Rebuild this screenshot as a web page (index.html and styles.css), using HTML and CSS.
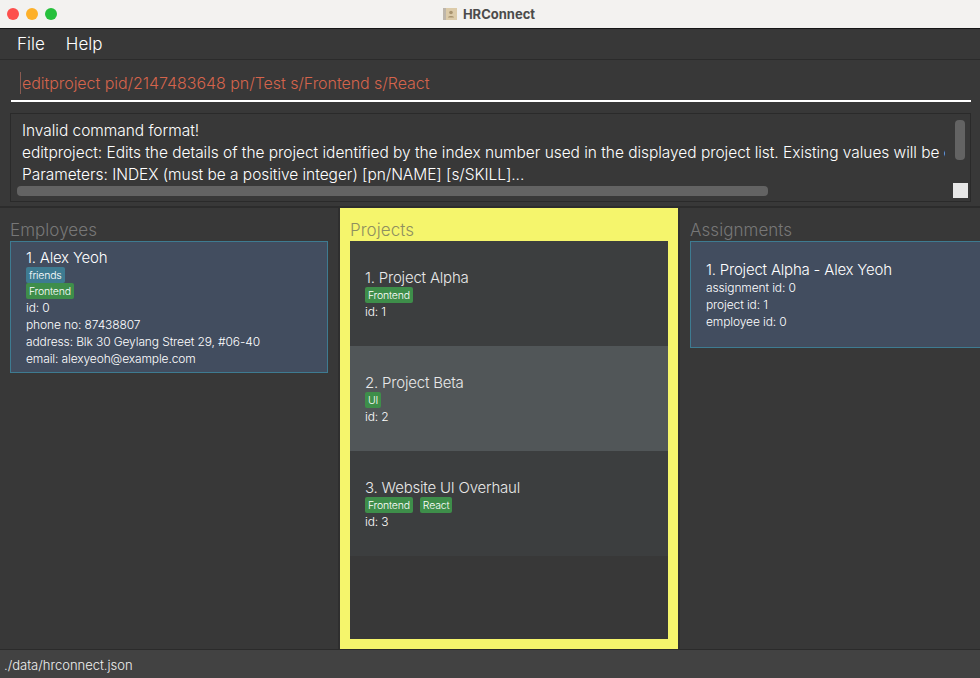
FILE: index.html
```html
<!DOCTYPE html>
<html lang="en">
<head>
<meta charset="utf-8">
<title>HRConnect</title>
<link rel="stylesheet" href="styles.css">
</head>
<body>
<div class="window">
  <header class="titlebar">
    <div class="lights"><span class="light red"></span><span class="light yellow"></span><span class="light green"></span></div>
    <div class="title">
      <svg class="appicon" width="14" height="14" viewBox="0 0 14 14"><rect x="0" y="1" width="14" height="12" fill="#dccba9"/><rect x="0" y="1" width="3" height="12" fill="#bdb6ab"/><circle cx="8" cy="5.5" r="1.8" fill="#a8946f"/><path d="M5 10.5c0-2 6-2 6 0z" fill="#a8946f"/></svg>
      <span>HRConnect</span>
    </div>
  </header>
  <nav class="menubar"><span>File</span><span>Help</span></nav>
  <section class="command">
    <div class="command-input"><span class="caret"></span>editproject pid/2147483648 pn/Test s/Frontend s/React</div>
  </section>
  <section class="result-wrap">
    <div class="result">
      <div class="result-text">
        <div>Invalid command format!</div>
        <div>editproject: Edits the details of the project identified by the index number used in the displayed project list. Existing values will be overwritten</div>
        <div>Parameters: INDEX (must be a positive integer) [pn/NAME] [s/SKILL]...</div>
      </div>
      <div class="vthumb"></div>
      <div class="hthumb"></div>
      <div class="corner"></div>
    </div>
  </section>
  <main class="panes">
    <section class="pane pane-employees">
      <h2 class="pane-title">Employees</h2>
      <div class="list">
        <article class="card selected employee">
          <div class="name">1. Alex Yeoh</div>
          <div class="tags"><span class="tag blue">friends</span></div>
          <div class="tags"><span class="tag">Frontend</span></div>
          <div class="line">id: 0</div>
          <div class="line">phone no: 87438807</div>
          <div class="line">address: Blk 30 Geylang Street 29, #06-40</div>
          <div class="line">email: alexyeoh@example.com</div>
        </article>
      </div>
    </section>
    <section class="pane pane-projects">
      <h2 class="pane-title">Projects</h2>
      <div class="list">
        <article class="row"><div class="name">1. Project Alpha</div><div class="tags"><span class="tag">Frontend</span></div><div class="line">id: 1</div></article>
        <article class="row even"><div class="name">2. Project Beta</div><div class="tags"><span class="tag">UI</span></div><div class="line">id: 2</div></article>
        <article class="row"><div class="name">3. Website UI Overhaul</div><div class="tags"><span class="tag">Frontend</span><span class="tag">React</span></div><div class="line">id: 3</div></article>
      </div>
    </section>
    <section class="pane pane-assignments">
      <h2 class="pane-title">Assignments</h2>
      <div class="list">
        <article class="card selected assignment">
          <div class="name">1. Project Alpha - Alex Yeoh</div>
          <div class="line">assignment id: 0</div>
          <div class="line">project id: 1</div>
          <div class="line">employee id: 0</div>
        </article>
      </div>
    </section>
  </main>
  <footer class="status">./data/hrconnect.json</footer>
</div>
</body>
</html>
```
FILE: styles.css
```css
* { box-sizing: border-box; margin: 0; padding: 0; }
html, body { width: 980px; height: 678px; overflow: hidden; }
body { font-family: Inter, "Liberation Sans", sans-serif; background: #383838; color: #fff; }
.window { width: 980px; height: 678px; display: flex; flex-direction: column; overflow: hidden; }

.titlebar { height: 29px; flex: none; background: #f3f2f0; border-bottom: 1px solid #161616; position: relative; display: flex; align-items: center; justify-content: center; }
.lights { position: absolute; left: 7px; top: 8px; display: flex; gap: 7px; }
.light { width: 12px; height: 12px; border-radius: 50%; }
.light.red { background: #fd4f4c; }
.light.yellow { background: #fdb029; }
.light.green { background: #26c03c; }
.title { display: flex; align-items: center; gap: 6px; font-size: 13px; font-weight: 700; color: #4b4b4b; margin-left: -2px; }

.menubar { height: 31px; flex: none; display: flex; gap: 21px; padding: 0 17px; align-items: center; font-size: 17px; font-weight: 300; color: #fff; border-bottom: 1px solid #2b2b2b; }

.command { height: 47px; flex: none; padding: 0 9px 0 11px; }
.command-input { height: 42px; border-bottom: 2px solid #fff; padding: 13px 0 0 11px; font-size: 16px; font-weight: 300; line-height: 20px; letter-spacing: -0.05px; color: #d4644c; position: relative; white-space: nowrap; }
.caret { position: absolute; left: 9px; top: 12px; width: 1px; height: 22px; background: #8a5a50; }

.result-wrap { height: 101px; flex: none; padding: 6px 9px 6px 10px; border-bottom: 2px solid #2c2c2c; }
.result { height: 89px; border: 1px solid #2a2a2a; position: relative; overflow: hidden; }
.result-text { padding: 6px 0 0 11px; font-size: 15.5px; font-weight: 300; line-height: 22px; letter-spacing: -0.04px; color: #fff; white-space: nowrap; width: 934px; overflow: hidden; }
.vthumb { position: absolute; left: 944px; top: 6px; width: 10px; height: 40px; border-radius: 4px; background: #636363; }
.hthumb { position: absolute; left: 6px; top: 72px; width: 751px; height: 10px; border-radius: 4px; background: #636363; }
.corner { position: absolute; left: 942px; top: 69px; width: 15px; height: 15px; background: #e8e8e8; }

.panes { flex: 1; min-height: 0; display: flex; }
.pane { flex: none; height: 100%; display: flex; flex-direction: column; padding: 10px; }
.pane-employees { width: 340px; border-right: 2px solid #2f2f2f; }
.pane-projects { width: 338px; background: #f5f56c; }
.pane-assignments { width: 340px; border-left: 2px solid #2f2f2f; margin-right: -38px; }
.pane-title { height: 23px; font-size: 17px; font-weight: 300; line-height: 23px; padding-top: 1px; color: #777; letter-spacing: 0.05px; }
.pane-projects .pane-title { color: #8f8f60; }
.list { flex: 1; min-height: 0; background: #383838; }

.card { background: #424d5f; border: 1px solid #3e7b91; padding: 6px 15px; }
.employee { height: 132px; }
.assignment { height: 107px; padding-top: 18px; width: 328px; }
.row { height: 105px; background: #3c3e3f; padding: 27px 15px 0; }
.row.even { background: #515658; }

.name { font-size: 15px; font-weight: 300; line-height: 19px; letter-spacing: -0.2px; color: #fff; }
.row .name { color: #e8e8e8; }
.line { font-size: 12px; font-weight: 300; line-height: 17px; letter-spacing: -0.12px; color: #fff; }
.tags { display: flex; gap: 7px; height: 16px; }
.tag { display: block; height: 16px; padding: 0 3px; border-radius: 2px; background: #3e8e4a; font-size: 10.5px; font-weight: 300; line-height: 17px; letter-spacing: -0.2px; color: #fff; }
.tag.blue { background: #3e7b91; }

.status { height: 29px; flex: none; background: #424242; border-top: 1px solid #2b2b2b; padding: 6px 0 0 4px; font-size: 13px; font-weight: 300; line-height: 18px; color: #f0f0f0; letter-spacing: 0; }
```
